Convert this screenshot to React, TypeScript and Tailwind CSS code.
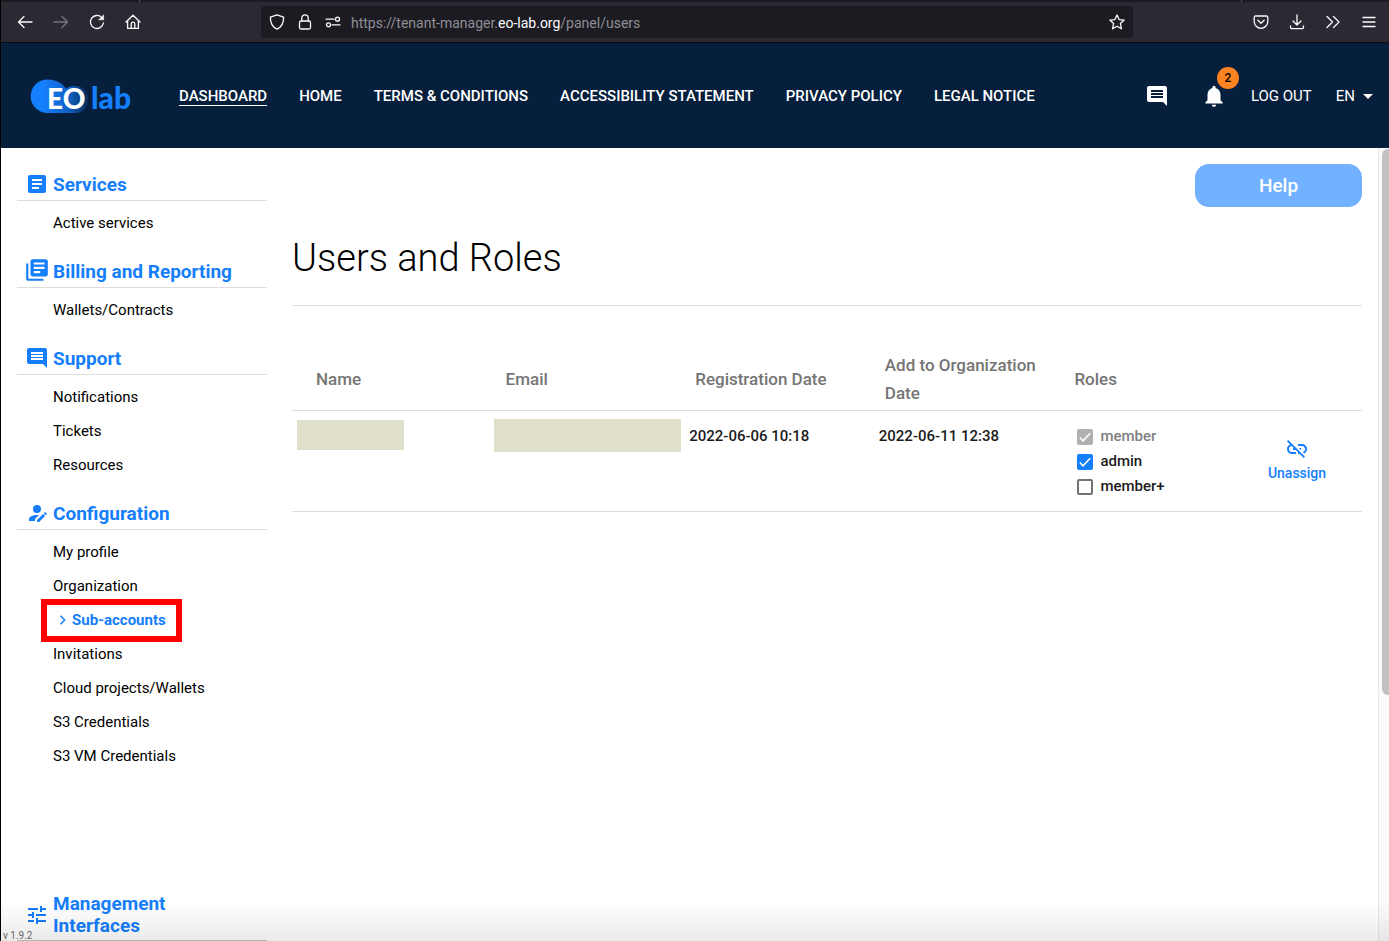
import type { ReactNode } from "react";
import { MdArticle, MdComment, MdLibraryBooks, MdLinkOff, MdNotifications, MdTune } from "react-icons/md";

type IconProps = { className?: string; children: ReactNode };

function LineIcon({ className = "", children }: IconProps) {
  return (
    <svg
      width="16"
      height="16"
      viewBox="0 0 16 16"
      fill="none"
      stroke="currentColor"
      strokeWidth="1.3"
      strokeLinecap="round"
      strokeLinejoin="round"
      className={"shrink-0 " + className}
      aria-hidden="true"
    >
      {children}
    </svg>
  );
}

function BrowserBar() {
  return (
    <div className="border-b border-[#0c0c0d] bg-[#2b2a33] text-[#fbfbfe]">
      <div className="flex h-[2px] bg-[#1c1b22]">
        <span className="ml-[138px] w-px bg-[#55545c]" />
        <span className="mr-[147px] ml-auto w-px bg-[#55545c]" />
      </div>
      <div className="flex h-10 items-center pr-3">
        <div className="flex w-[260px] shrink-0 items-center gap-5 pl-4">
          <button aria-label="Back">
            <LineIcon>
              <path d="M15 8H1.5M7 2.5 1.5 8 7 13.5" />
            </LineIcon>
          </button>
          <button aria-label="Forward" disabled className="text-[#77767e]">
            <LineIcon>
              <path d="M1 8h13.5M9 2.5 14.5 8 9 13.5" />
            </LineIcon>
          </button>
          <button aria-label="Reload">
            <LineIcon>
              <path d="M14.4 9A6.5 6.5 0 1 1 12.8 3.6" />
              <path d="M14.6 1.2v4.6H10z" fill="currentColor" strokeWidth="0.6" />
            </LineIcon>
          </button>
          <button aria-label="Home">
            <LineIcon>
              <path d="M1 8 8 1.3 15 8M2.6 6.8v7.6h10.8V6.8M6.2 14.2V10a1.8 1.8 0 0 1 3.6 0v4.2" />
            </LineIcon>
          </button>
        </div>
        <div className="flex h-8 min-w-0 flex-1 items-center rounded bg-[#1c1b22] px-2">
          <LineIcon>
            <path d="M8 .8 1.4 3.1C1.2 8.5 3 13 8 15.2 13 13 14.8 8.5 14.6 3.1z" />
          </LineIcon>
          <LineIcon className="ml-3">
            <path d="M4.8 7V4a3.2 3.2 0 0 1 6.4 0v3" />
            <rect x="2.5" y="7" width="11" height="8" rx="1.5" />
          </LineIcon>
          <LineIcon className="ml-3">
            <path d="M1 5.2h8M7 10.8h8" />
            <circle cx="12.5" cy="5.2" r="2" />
            <circle cx="3.5" cy="10.8" r="2" />
          </LineIcon>
          <p className="ml-2.5 min-w-0 flex-1 truncate pt-0.5 text-sm text-[#8f8e96]">
            https://tenant-manager.<span className="text-[#fbfbfe]">eo-lab.org</span>/panel/users
          </p>
          <button aria-label="Bookmark this page">
            <LineIcon>
              <path d="m8 .9 2.1 4.7 5.1.5-3.8 3.5 1.1 5.2L8 12.2l-4.5 2.6 1.1-5.2L.8 6.1l5.1-.5z" />
            </LineIcon>
          </button>
        </div>
        <div className="flex w-[244px] shrink-0 items-center justify-end gap-5">
          <button aria-label="Save to Pocket">
            <LineIcon>
              <path d="M2.5 2h11A1.3 1.3 0 0 1 14.8 3.3V7.5a6.8 6.8 0 0 1-13.6 0V3.3A1.3 1.3 0 0 1 2.5 2zM4.9 6.3 8 9.3l3.1-3" />
            </LineIcon>
          </button>
          <button aria-label="Downloads">
            <LineIcon>
              <path d="M8 .8v10M4 7l4 4 4-4M1.5 11.8v1.4a1.5 1.5 0 0 0 1.5 1.5h10a1.5 1.5 0 0 0 1.5-1.5v-1.4" />
            </LineIcon>
          </button>
          <button aria-label="More tools">
            <LineIcon>
              <path d="M2 2.5 7.5 8 2 13.5M8.5 2.5 14 8l-5.5 5.5" />
            </LineIcon>
          </button>
          <button aria-label="Open application menu">
            <LineIcon>
              <path d="M2 3.5h12M2 8h12M2 12.5h12" />
            </LineIcon>
          </button>
        </div>
      </div>
    </div>
  );
}

function Logo() {
  return (
    <svg width="108" height="48" viewBox="0 -7 108 48" role="img" aria-label="EO lab" className="block">
      <defs>
        <linearGradient id="cloud" x1="0" x2="60" y1="0" y2="0" gradientUnits="userSpaceOnUse">
          <stop offset="0.2" stopColor="#1580ff" />
          <stop offset="0.65" stopColor="#1161c4" />
          <stop offset="1" stopColor="#06264b" />
        </linearGradient>
      </defs>
      <path
        d="M17.500 34A16.800 16.800 0 0 1 17.500.4C26 .4 32.500 4 36 9.500 39 7.600 42 7 45 7a13.500 13.500 0 0 1 0 27z"
        fill="url(#cloud)"
      />
      <g className="font-['Lato',sans-serif] font-black">
        <text x="17" y="30" fontSize="28" fill="#ffffff">EO</text>
        <text x="61" y="30" fontSize="30" fill="#1580ff">lab</text>
      </g>
    </svg>
  );
}

const navLinks = ["DASHBOARD", "HOME", "TERMS & CONDITIONS", "ACCESSIBILITY STATEMENT", "PRIVACY POLICY", "LEGAL NOTICE"];

function SiteHeader() {
  return (
    <header className="flex h-[105px] items-center bg-[#051f3c] pr-4 pl-[29px] text-white">
      <a href="#home" className="mr-[41px] shrink-0">
        <Logo />
      </a>
      <nav className="flex items-center gap-8 pt-0.5 text-[15px] font-medium whitespace-nowrap">
        {navLinks.map((label, i) => (
          <a key={label} href="#nav" className={i === 0 ? "underline underline-offset-4" : ""}>
            {label}
          </a>
        ))}
      </nav>
      <div className="ml-auto flex items-center text-[15px] whitespace-nowrap">
        <button aria-label="Messages">
          <MdComment size={24} />
        </button>
        <button aria-label="Notifications" className="relative ml-8">
          <MdNotifications size={26} />
          <span className="absolute -top-4 left-4 flex size-[22px] items-center justify-center rounded-full bg-[#ff8320] text-xs font-medium text-black">
            2
          </span>
        </button>
        <button className="ml-6 pt-0.5">LOG OUT</button>
        <button className="ml-6 flex items-center gap-2 pt-0.5">
          EN
          <svg width="10" height="5" viewBox="0 0 10 5" fill="currentColor" aria-hidden="true">
            <path d="M0 0h10L5 5z" />
          </svg>
        </button>
      </div>
    </header>
  );
}

function AccountEditIcon() {
  return (
    <svg width="24" height="24" viewBox="0 0 24 24" fill="currentColor" aria-hidden="true">
      <path d="M21.7 13.35l-1 1-2.05-2.05 1-1c.21-.22.56-.22.77 0l1.28 1.28c.22.21.22.56 0 .77M12 18.94l6.06-6.06 2.05 2.05L14.06 21H12v-2.06M12 14c-4.42 0-8 1.79-8 4v2h6v-1.89l4-4c-.66-.08-1.33-.11-2-.11m0-10a4 4 0 0 0-4 4 4 4 0 0 0 4 4 4 4 0 0 0 4-4 4 4 0 0 0-4-4z" />
    </svg>
  );
}

type Section = { title: string; icon: ReactNode; items: string[] };

const sections: Section[] = [
  { title: "Services", icon: <MdArticle size={24} />, items: ["Active services"] },
  { title: "Billing and Reporting", icon: <MdLibraryBooks size={26} />, items: ["Wallets/Contracts"] },
  { title: "Support", icon: <MdComment size={24} />, items: ["Notifications", "Tickets", "Resources"] },
  {
    title: "Configuration",
    icon: <AccountEditIcon />,
    items: [
      "My profile",
      "Organization",
      "Sub-accounts",
      "Invitations",
      "Cloud projects/Wallets",
      "S3 Credentials",
      "S3 VM Credentials",
    ],
  },
];

function SectionHeading({ title, icon }: { title: string; icon: ReactNode }) {
  return (
    <h2 className="flex min-h-12 items-end border-b border-[#dedede] pb-1 text-[19px] leading-[22px] font-bold text-[#147efb]">
      <span className="flex w-9 shrink-0 justify-center pl-1">{icon}</span>
      <span className="max-w-[200px]">{title}</span>
    </h2>
  );
}

function SideItem({ label }: { label: string }) {
  if (label === "Sub-accounts") {
    return (
      <li className="relative flex h-[34px] items-center pl-[42px]">
        <span className="absolute -top-1 left-6 h-[43px] w-[141px] border-[6px] border-[#ff0000]" />
        <a href="#sub-accounts" aria-current="page" className="flex items-center gap-[5px] font-bold text-[#147efb]">
          <svg width="8" height="10" viewBox="0 0 8 10" fill="none" stroke="currentColor" strokeWidth="1.5" aria-hidden="true">
            <path d="M1.5.8 5.7 5 1.5 9.2" />
          </svg>
          {label}
        </a>
      </li>
    );
  }
  return (
    <li className="flex h-[34px] items-center pl-9">
      <a href="#panel">{label}</a>
    </li>
  );
}

function Sidebar() {
  return (
    <aside className="w-[250px] shrink-0 pt-[5px] text-[15px] text-black">
      {sections.map((s) => (
        <section key={s.title}>
          <SectionHeading title={s.title} icon={s.icon} />
          <ul className="pt-[5px]">
            {s.items.map((item) => (
              <SideItem key={item} label={item} />
            ))}
          </ul>
        </section>
      ))}
      <section className="mt-[120px]">
        <h2 className="flex items-center border-b border-[#c4c4c4] pb-[3px] text-[19px] leading-[22px] font-bold text-[#147efb]">
          <span className="flex w-9 shrink-0 justify-center pl-1">
            <MdTune size={24} />
          </span>
          <span className="max-w-[140px]">Management Interfaces</span>
        </h2>
      </section>
    </aside>
  );
}

type RoleProps = { name: string; checked?: boolean; disabled?: boolean };

function RoleOption({ name, checked = false, disabled = false }: RoleProps) {
  return (
    <label className={"flex h-[25px] items-center gap-[7px] " + (disabled ? "text-[#808080]" : "text-[#1c1c1c]")}>
      <span className="relative flex">
        <input
          type="checkbox"
          defaultChecked={checked}
          disabled={disabled}
          className="peer size-4 appearance-none rounded-[2px] border-2 border-[#737373] checked:border-[#147efb] checked:bg-[#147efb] disabled:border-[#b0b0b0] disabled:bg-[#b0b0b0]"
        />
        <svg
          width="16"
          height="16"
          viewBox="0 0 16 16"
          fill="none"
          stroke="#ffffff"
          strokeWidth="1.5"
          className="pointer-events-none absolute inset-0 hidden peer-checked:block"
          aria-hidden="true"
        >
          <path d="M2.8 8.5 6 11.8 13.2 4.2" />
        </svg>
      </span>
      {name}
    </label>
  );
}

function UsersTable() {
  return (
    <table className="mt-10 w-full table-fixed text-left">
      <colgroup>
        <col />
        <col />
        <col />
        <col />
        <col />
        <col className="w-[122px]" />
      </colgroup>
      <thead>
        <tr className="border-b border-[#dedede] text-[17px] leading-7 text-[#757575]">
          {["Name", "Email", "Registration Date", "Add to Organization Date", "Roles"].map((h) => (
            <th key={h} className="pt-[5px] pr-3 pb-[3px] pl-6 font-medium">
              {h}
            </th>
          ))}
          <td />
        </tr>
      </thead>
      <tbody>
        <tr className="h-[101px] border-b border-[#dedede] align-top text-[15px] font-medium text-[#1c1c1c]">
          <td className="pt-[9px] pl-[5px]">
            <div className="h-[30px] w-[107px] bg-[#e0dfca]" />
          </td>
          <td className="pt-2 pl-3">
            <div className="h-[33px] w-[187px] bg-[#e0dfca]" />
          </td>
          <td className="pt-[14px] pl-[18px]">2022-06-06 10:18</td>
          <td className="pt-[14px] pl-[18px]">2022-06-11 12:38</td>
          <td className="pt-[13px] pl-[27px]">
            <RoleOption name="member" checked disabled />
            <RoleOption name="admin" checked />
            <RoleOption name="member+" />
          </td>
          <td className="pt-[26px] pr-2">
            <button className="mx-auto flex flex-col items-center text-[#147efb]">
              <MdLinkOff size={24} />
              <span className="text-sm leading-6">Unassign</span>
            </button>
          </td>
        </tr>
      </tbody>
    </table>
  );
}

export default function App() {
  return (
    <div className="flex min-h-screen flex-col border-l border-black bg-white font-['Roboto',sans-serif]">
      <BrowserBar />
      <SiteHeader />
      <div className="relative flex flex-1">
        <div className="flex min-w-0 flex-1 px-4">
          <Sidebar />
          <main className="ml-[25px] min-w-0 flex-1 pt-4">
            <div className="flex justify-end">
              <button className="h-[43px] w-[167px] rounded-[14px] bg-[#72b1ff] pt-0.5 text-[19px] font-medium text-white">
                Help
              </button>
            </div>
            <h1 className="border-b border-[#dedede] pt-[21px] pb-[17px] text-[38px] leading-[60px] font-light text-black">
              Users and Roles
            </h1>
            <UsersTable />
          </main>
        </div>
        <div className="w-[11px] shrink-0 border-l border-[#e7e7e7] bg-[#fafafa] pt-px pl-[3px]">
          <div className="h-[546px] rounded-l-md bg-[#c1c1c1]" />
        </div>
        <div className="pointer-events-none absolute inset-x-0 bottom-0 h-10 bg-linear-to-b from-transparent to-black/8" />
        <span className="absolute bottom-0 left-0.5 text-[10px] leading-[10px] text-[#666666]">v 1.9.2</span>
      </div>
    </div>
  );
}
